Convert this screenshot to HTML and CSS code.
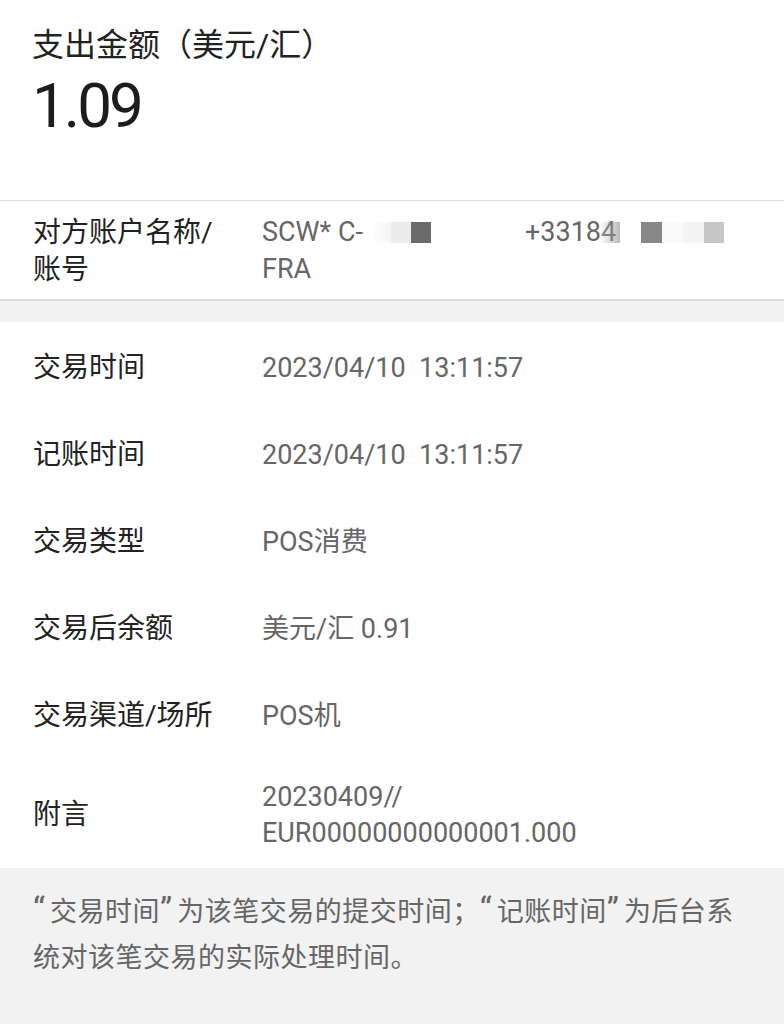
FILE: index.html
```html
<!DOCTYPE html>
<html lang="zh-CN">
<head>
<meta charset="utf-8">
<link rel="stylesheet" href="styles.css">
</head>
<body>
<div class="header">
  <div class="title">支出金额（美元/汇）</div>
  <div class="amount">1.09</div>
</div>
<div class="party">
  <div class="label">对方账户名称/<br>账号</div>
  <div class="value">
    <div class="line1">
      <div class="seg"><span>SCW* C-</span><span class="m m-fade1"></span><span class="m m-light"></span><span class="m m-dark"></span></div>
      <div class="seg2"><span class="phone">+33184</span><span class="m m-over"></span><span class="m m-mid"></span><span class="m m-faint"></span><span class="m m-faint2"></span><span class="m m-lgray"></span></div>
    </div>
    <div>FRA</div>
  </div>
</div>
<div class="gap"></div>
<div class="list">
  <div class="row"><div class="label">交易时间</div><div class="value">2023/04/10&nbsp;&nbsp;13:11:57</div></div>
  <div class="row"><div class="label">记账时间</div><div class="value">2023/04/10&nbsp;&nbsp;13:11:57</div></div>
  <div class="row"><div class="label">交易类型</div><div class="value">POS消费</div></div>
  <div class="row"><div class="label">交易后余额</div><div class="value">美元/汇 0.91</div></div>
  <div class="row"><div class="label">交易渠道/场所</div><div class="value">POS机</div></div>
  <div class="row tall"><div class="label">附言</div><div class="value">20230409//<br>EUR00000000000001.000</div></div>
</div>
<div class="note"><span class="q">“</span>交易时间<span class="q">”</span>为该笔交易的提交时间；<span class="q">“</span>记账时间<span class="q">”</span>为后台系统对该笔交易的实际处理时间。</div>
</body>
</html>
```
FILE: styles.css
```css
* { box-sizing: border-box; }
html, body { margin: 0; padding: 0; }
body {
  width: 784px;
  min-height: 1024px;
  background: #f2f2f2;
  font-family: Roboto, "Noto Sans CJK SC", sans-serif;
  color: #222;
}
.header {
  background: #fff;
  height: 201px;
  padding: 25px 33px 0 32px;
  border-bottom: 1px solid #dcdcdc;
}
.title {
  font-size: 32px;
  line-height: 40px;
  color: #222;
}
.amount {
  margin-top: 6px;
  font-size: 62px;
  line-height: 70px;
  letter-spacing: -3px;
  color: #1c1c1c;
}
.party {
  background: #fff;
  display: grid;
  grid-template-columns: 229px 1fr;
  padding: 13px 0 11px 33px;
  border-bottom: 2px solid #dedede;
  line-height: 37px;
}
.label { color: #222; font-size: 28px; }
.value { color: #666; font-size: 27px; }
.line1 {
  display: flex;
  align-items: center;
  white-space: nowrap;
}
.seg {
  width: 263px;
  display: flex;
  align-items: center;
  flex: none;
}
.seg2 {
  display: flex;
  align-items: center;
}
.m {
  display: inline-block;
  height: 21px;
  flex: none;
}
.m-fade1 { width: 20px; margin-left: 8px; background: linear-gradient(90deg, #fff, #f5f5f5); }
.m-light { width: 20px; background: #ececec; }
.m-dark { width: 20px; background: #6b6b6b; }
.m-over { width: 20px; margin-left: -16px; background: linear-gradient(90deg, rgba(255,255,255,0.2), rgba(140,140,140,0.6)); }
.m-mid { width: 21px; background: #888; margin-left: 21px; }
.m-faint { width: 21px; background: #fafafa; }
.m-faint2 { width: 21px; background: #f4f4f4; }
.m-lgray { width: 20px; background: #c6c6c6; }
.gap { height: 21px; }
.list { background: #fff; }
.row {
  display: grid;
  grid-template-columns: 229px 1fr;
  align-items: center;
  height: 87px;
  padding: 4px 0 0 33px;
  line-height: 36px;
}
.row.tall { height: 111px; }
.note {
  padding: 21px 33px 40px;
  font-size: 27px;
  letter-spacing: 0.5px;
  line-height: 46px;
  color: #666;
}
.q {
  font-size: 34px;
  line-height: 0;
  letter-spacing: 5px;
}
```
